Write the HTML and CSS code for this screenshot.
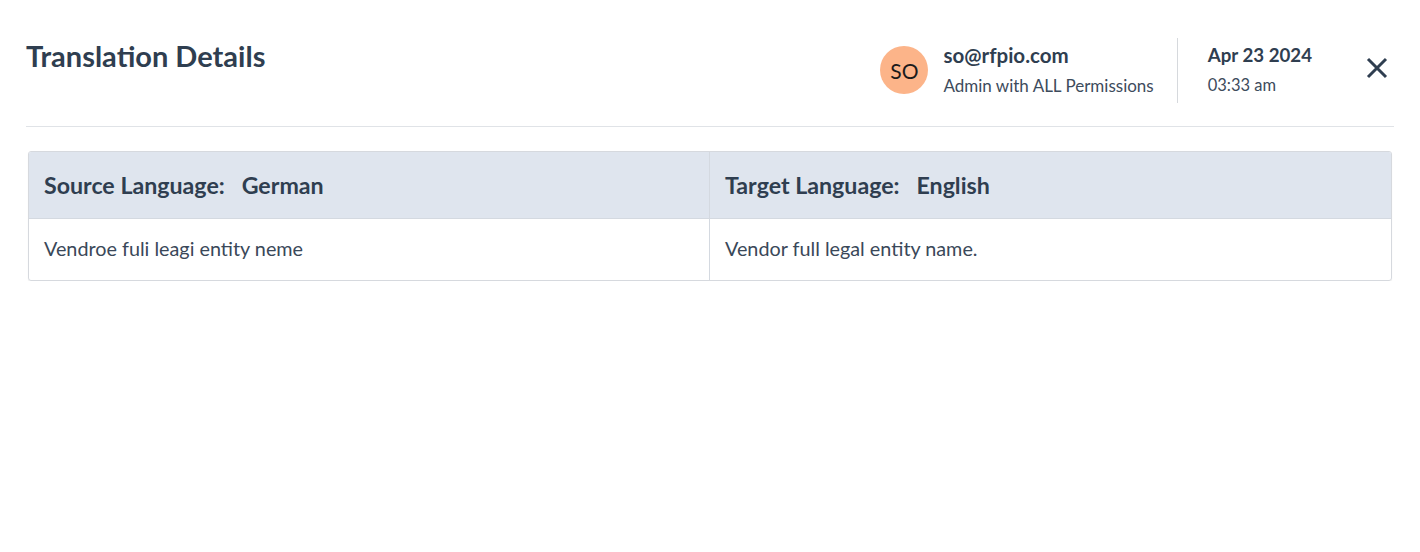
FILE: index.html
```html
<!DOCTYPE html>
<html>
<head>
<meta charset="utf-8">
<link rel="stylesheet" href="styles.css">
</head>
<body>
<div class="modal">
  <header class="head">
    <h1 class="title">Translation Details</h1>
    <div class="meta">
      <div class="user">
        <div class="avatar">SO</div>
        <div class="user-text">
          <div class="email">so@rfpio.com</div>
          <div class="role">Admin with ALL Permissions</div>
        </div>
      </div>
      <div class="date">
        <div class="day">Apr 23 2024</div>
        <div class="time">03:33 am</div>
      </div>
      <button class="close" aria-label="Close">
        <svg width="22" height="22" viewBox="0 0 22 22"><path d="M2 2 L20 20 M20 2 L2 20" stroke="#2f3e50" stroke-width="3" stroke-linecap="butt"/></svg>
      </button>
    </div>
  </header>
  <div class="table">
    <div class="row th">
      <div class="cell">Source Language:&nbsp;&nbsp; German</div>
      <div class="cell">Target Language:&nbsp;&nbsp; English</div>
    </div>
    <div class="row td">
      <div class="cell">Vendroe fuli leagi entity neme</div>
      <div class="cell">Vendor full legal entity name.</div>
    </div>
  </div>
</div>
</body>
</html>
```
FILE: styles.css
```css
* { box-sizing: border-box; }
body {
  margin: 0;
  background: #fff;
  font-family: "Lato", "Noto Sans", sans-serif;
  color: #2f3e50;
}
.modal {
  padding: 38px 26px 0 26px;
}
.head {
  display: flex;
  justify-content: space-between;
  align-items: flex-start;
  height: 89px;
  border-bottom: 1px solid #e0e3e7;
}
.title {
  margin: 0;
  font-size: 29px;
  font-weight: 700;
  line-height: 36px;
  color: #2f3e50;
}
.meta {
  display: flex;
  align-items: flex-start;
}
.user {
  display: flex;
  align-items: flex-start;
  padding-top: 7px;
  padding-right: 23px;
  border-right: 1px solid #d6d9dd;
  height: 65px;
}
.avatar {
  width: 48px;
  height: 48px;
  border-radius: 50%;
  background: #fcb489;
  color: #1b1b1b;
  font-size: 21px;
  display: flex;
  align-items: center;
  justify-content: center;
  margin-right: 15px;
  margin-top: 1px;
}
.email {
  font-size: 20.5px;
  font-weight: 700;
  line-height: 22px;
  margin-top: -1px;
}
.role {
  font-size: 17px;
  line-height: 20px;
  margin-top: 10px;
  color: #3d4b5c;
}
.date {
  padding-left: 30px;
  padding-top: 6px;
}
.day {
  font-size: 18.7px;
  font-weight: 700;
  line-height: 22px;
}
.time {
  font-size: 16.5px;
  line-height: 20px;
  margin-top: 9px;
  color: #3d4b5c;
}
.close {
  background: none;
  border: 0;
  padding: 0;
  margin: 19px 6px 0 54px;
  width: 22px;
  height: 22px;
  cursor: pointer;
}
.table {
  margin: 24px 2px 0 2px;
  border: 1px solid #d6d9de;
  border-radius: 3px;
  box-shadow: 0 1px 1px rgba(0,0,0,0.08);
  overflow: hidden;
}
.row {
  display: grid;
  grid-template-columns: 681px 1fr;
}
.th {
  background: #dfe5ee;
  height: 67px;
  border-bottom: 1px solid #d4d9e0;
}
.th .cell {
  font-size: 23.2px;
  font-weight: 700;
  color: #2f3e50;
}
.cell {
  display: flex;
  align-items: center;
  padding-left: 15px;
}
.row .cell:first-child {
  border-right: 1px solid #d4d9e0;
}
.td {
  height: 61px;
}
.td .cell {
  font-size: 19.8px;
  color: #3a4859;
  padding-bottom: 3px;
}
```
